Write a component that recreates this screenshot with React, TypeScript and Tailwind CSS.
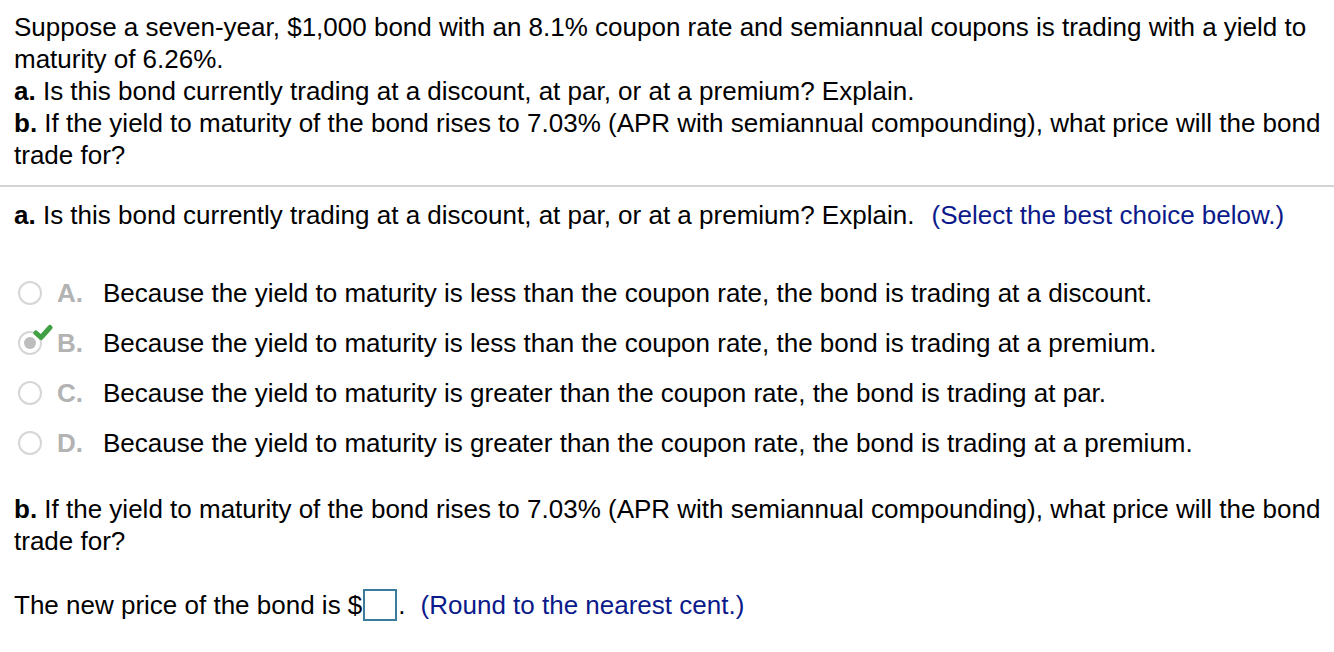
export default function App() {
  const options = [
    { key: "A", text: "Because the yield to maturity is less than the coupon rate, the bond is trading at a discount." },
    { key: "B", text: "Because the yield to maturity is less than the coupon rate, the bond is trading at a premium.", checked: true },
    { key: "C", text: "Because the yield to maturity is greater than the coupon rate, the bond is trading at par." },
    { key: "D", text: "Because the yield to maturity is greater than the coupon rate, the bond is trading at a premium." },
  ];

  return (
    <div
      className="min-h-screen bg-white text-black text-[26px] leading-[32px]"
      style={{ fontFamily: '"Liberation Sans", Arial, sans-serif' }}
    >
      {/* question stem */}
      <div className="px-[14px] pt-[11px] pb-[14px] whitespace-nowrap">
        <p>
          Suppose a seven-year, $1,000 bond with an 8.1% coupon rate and semiannual coupons is trading with a yield to
          <br />
          maturity of 6.26%.
        </p>
        <p>
          <b>a.</b> Is this bond currently trading at a discount, at par, or at a premium? Explain.
        </p>
        <p>
          <b>b.</b> If the yield to maturity of the bond rises to 7.03% (APR with semiannual compounding), what price will the bond
          <br />
          trade for?
        </p>
      </div>

      <div className="h-[2px] bg-[#d4d4d4]" />

      {/* part a */}
      <div className="px-[14px] pt-[12px] whitespace-nowrap">
        <p>
          <b>a.</b> Is this bond currently trading at a discount, at par, or at a premium? Explain.{" "}
          <span className="text-[#0b1a8a] ml-[10px]">(Select the best choice below.)</span>
        </p>

        <div className="mt-[46px] flex flex-col gap-[18px]">
          {options.map((o) => (
            <div key={o.key} className="flex items-center">
              <div className="relative w-[43px] h-[32px] flex items-center">
                <div className="ml-[4px] w-[24px] h-[24px] rounded-full border-2 border-[#d6d6d6] flex items-center justify-center">
                  {o.checked && <div className="w-[12px] h-[12px] rounded-full bg-[#bdbdbd]" />}
                </div>
                {o.checked && (
                  <svg className="absolute left-[19px] top-[-3px]" width="20" height="18" viewBox="0 0 20 18">
                    <path
                      d="M3 9 L8 13.5 L17 3.5"
                      fill="none"
                      stroke="#41a043"
                      strokeWidth="5"
                      strokeLinecap="round"
                      strokeLinejoin="round"
                    />
                  </svg>
                )}
              </div>
              <span className="w-[46px] font-bold text-[#b3b3b3]">{o.key}.</span>
              <span>{o.text}</span>
            </div>
          ))}
        </div>

        {/* part b */}
        <p className="mt-[34px]">
          <b>b.</b> If the yield to maturity of the bond rises to 7.03% (APR with semiannual compounding), what price will the bond
          <br />
          trade for?
        </p>

        <div className="mt-[32px] flex items-center">
          <span>The new price of the bond is $</span>
          <span className="inline-block w-[34px] h-[32px] border-2 border-[#3b7c9c] mx-[1px]" />
          <span>.</span>
          <span className="text-[#0b1a8a] ml-[15px]">(Round to the nearest cent.)</span>
        </div>
      </div>
    </div>
  );
}
